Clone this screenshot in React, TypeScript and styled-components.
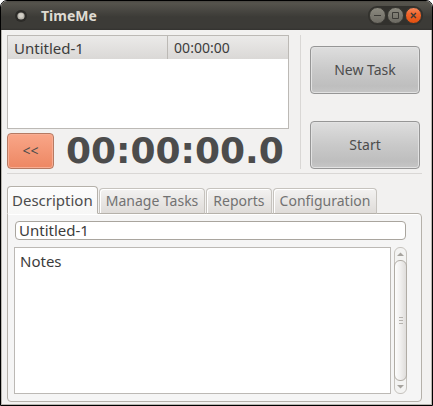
import React, { useState } from "react";
import styled, { createGlobalStyle, css } from "styled-components";

const Global = createGlobalStyle`
  *, *::before, *::after { box-sizing: border-box; }
  body { margin: 0; background: #fff; }
  button, input, textarea, table { font: inherit; color: inherit; }
  button { padding: 0; }
`;

const Window = styled.div`
  display: flex;
  flex-direction: column;
  min-height: 100vh;
  border: 1px solid #000;
  border-radius: 7px 7px 0 0;
  overflow: hidden;
  background: #f2f1f0;
  color: #4c4c4c;
  font: 15px/20px "Noto Sans", "Open Sans", sans-serif;
`;

const TitleBar = styled.header`
  display: flex;
  align-items: center;
  height: 29px;
  padding: 0 9px 0 12px;
  gap: 12px;
  background: linear-gradient(#4a4842, #56544d 2px, #3c3b37 16px, #3c3b37 27px, #33322f);
`;

const Title = styled.h1`
  flex: 1;
  margin: 0;
  font: bold 14px/20px "Noto Sans", sans-serif;
  color: #dfdbd2;
`;

const WindowButtons = styled.div`
  display: flex;
  gap: 1px;
  padding: 1px;
  border-radius: 9px;
  background: #32312d;
`;

const WindowButton = styled.button<{ $close?: boolean }>`
  display: flex;
  width: 17px;
  height: 17px;
  border: 1px solid #393833;
  border-radius: 50%;
  color: #3c3b37;
  background: ${(p) => (p.$close ? "linear-gradient(#f58a5f, #f2642a 40%, #e2500f)" : "linear-gradient(#8b897f, #6c6a62)")};
`;

const Body = styled.main`
  flex: 1;
  display: flex;
  flex-direction: column;
  padding: 5px 9px 2px 5px;
  border: 1px solid #b9b6b0;
  border-top: 0;
`;

const Top = styled.section`
  display: flex;
  padding-right: 2px;
  padding-bottom: 4px;
  border-bottom: 1px solid #d9d7d5;
`;

const Left = styled.div`
  flex: 1;
  display: flex;
  flex-direction: column;
  gap: 4px;
`;

const TaskList = styled.div`
  height: 94px;
  border: 1px solid #bcb9b5;
  background: #fff;
`;

const TaskTable = styled.table`
  width: 100%;
  border-collapse: collapse;
  color: #3c3c3c;
`;

const TaskRow = styled.tr`
  height: 23px;
  background: linear-gradient(#ebeae9, #dad8d6);
`;

const Cell = styled.td`
  padding: 0 6px;
`;

const TimeCell = styled(Cell)`
  width: 43%;
  border-left: 1px solid #bcb9b5;
  font-size: 14px;
`;

const TimerRow = styled.div`
  display: flex;
  align-items: center;
  gap: 12px;
  height: 36px;
`;

const PushButton = styled.button<{ $accent?: boolean }>`
  border-radius: 4px;
  font-size: 14px;
  ${(p) =>
    p.$accent
      ? css`
          width: 47px;
          height: 36px;
          border: 1px solid #b57a63;
          background: linear-gradient(#f9a688, #ed8763);
          box-shadow: inset 0 0 0 1px #f8ad93;
        `
      : css`
          width: 110px;
          height: 48px;
          border: 1px solid #969696;
          background: linear-gradient(#dedede, #c9c9c9 50%, #bebebe 85%, #c6c6c6);
          box-shadow: inset 0 0 0 1px #e2e2e2;
        `}
`;

const Timer = styled.output`
  font: bold 36px/36px "DejaVu Sans", sans-serif;
  white-space: nowrap;
`;

const Divider = styled.div`
  width: 1px;
  margin: 0 9px 0 11px;
  background: #d9d7d5;
`;

const Actions = styled.div`
  display: flex;
  flex-direction: column;
  justify-content: space-between;
  padding-top: 11px;
`;

const Tabs = styled.div`
  position: relative;
  display: flex;
  align-items: flex-end;
  gap: 1px;
  margin-top: 12px;
  height: 28px;
  margin-bottom: -1px;
`;

const Tab = styled.button<{ $active: boolean }>`
  height: ${(p) => (p.$active ? 28 : 26)}px;
  padding: 0 ${(p) => (p.$active ? 4 : 6)}px;
  border: 1px solid ${(p) => (p.$active ? "#b5b1aa" : "#c6c3be")};
  border-bottom-color: ${(p) => (p.$active ? "#f7f7f6" : "#b5b1aa")};
  border-radius: 4px 4px 0 0;
  font-size: ${(p) => (p.$active ? 15 : 14)}px;
  color: ${(p) => (p.$active ? "#4c4c4c" : "#727272")};
  background: ${(p) => (p.$active ? "linear-gradient(#fcfcfc, #f7f7f6)" : "linear-gradient(#f3f2f1, #dfdcd9)")};
  box-shadow: inset 1px 1px #fff;
`;

const Panel = styled.section`
  flex: 1;
  display: flex;
  flex-direction: column;
  gap: 7px;
  padding: 7px 14px 7px 6px;
  border: 1px solid #b5b1aa;
  border-radius: 0 4px 4px 4px;
  background: #f5f5f5;
  box-shadow: inset 0 1px #fff;
`;

const NameInput = styled.input`
  height: 19px;
  margin: 0 1px;
  padding: 0 3px 2px;
  border: 1px solid #a9a59e;
  border-radius: 4px;
  background: #fff;
  color: #3c3c3c;
`;

const NotesRow = styled.div`
  flex: 1;
  display: flex;
  gap: 3px;
`;

const Notes = styled.textarea`
  flex: 1;
  min-width: 0;
  min-height: 147px;
  margin: 0;
  padding: 3px 5px;
  border: 1px solid #bcb9b5;
  border-radius: 0;
  resize: none;
  overflow: hidden;
  background: #fff;
  color: #3c3c3c;
`;

const ScrollTrack = styled.div`
  display: flex;
  flex-direction: column;
  width: 13px;
  border: 1px solid #c6c3be;
  border-radius: 6px;
  background: #f3f3f2;
`;

const ScrollArrow = styled.button`
  display: flex;
  align-items: center;
  justify-content: center;
  height: 12px;
  border: 0;
  background: none;
`;

const ScrollThumb = styled.div`
  flex: 1;
  display: flex;
  align-items: center;
  justify-content: center;
  margin: 0 -1px;
  border: 1px solid #b0aca5;
  border-radius: 6px;
  background: linear-gradient(90deg, #fdfdfd, #f0efee 50%, #dfdddb);
`;

const tabNames = ["Description", "Manage Tasks", "Reports", "Configuration"];

export default function App() {
  const [active, setActive] = useState(tabNames[0]);
  return (
    <>
      <Global />
      <Window>
        <TitleBar>
          <svg width="16" height="16" viewBox="0 0 16 16" aria-hidden="true">
            <circle cx="8" cy="8" r="6" fill="#2c2b28" />
            <circle cx="8" cy="8" r="3.6" fill="#b9b6ae" />
            <circle cx="8" cy="7.5" r="2.2" fill="#d3d0c8" />
          </svg>
          <Title>TimeMe</Title>
          <WindowButtons>
            <WindowButton aria-label="Minimize">
              <svg width="15" height="15"><path d="M4 7.5h7" stroke="currentColor" /></svg>
            </WindowButton>
            <WindowButton aria-label="Maximize">
              <svg width="15" height="15"><path d="M4.5 4.5h6v6h-6z" fill="none" stroke="currentColor" /></svg>
            </WindowButton>
            <WindowButton aria-label="Close" $close>
              <svg width="15" height="15"><path d="M5 5l5 5M10 5l-5 5" fill="none" stroke="currentColor" strokeWidth="1.4" /></svg>
            </WindowButton>
          </WindowButtons>
        </TitleBar>
        <Body>
          <Top>
            <Left>
              <TaskList>
                <TaskTable aria-label="Tasks">
                  <tbody>
                    <TaskRow>
                      <Cell>Untitled-1</Cell>
                      <TimeCell>00:00:00</TimeCell>
                    </TaskRow>
                  </tbody>
                </TaskTable>
              </TaskList>
              <TimerRow>
                <PushButton $accent aria-label="Collapse">&lt;&lt;</PushButton>
                <Timer>00:00:00.0</Timer>
              </TimerRow>
            </Left>
            <Divider />
            <Actions>
              <PushButton>New Task</PushButton>
              <PushButton>Start</PushButton>
            </Actions>
          </Top>
          <Tabs role="tablist">
            {tabNames.map((name) => (
              <Tab key={name} role="tab" aria-selected={name === active} $active={name === active} onClick={() => setActive(name)}>
                {name}
              </Tab>
            ))}
          </Tabs>
          <Panel role="tabpanel" aria-label={active}>
            <NameInput aria-label="Task name" defaultValue="Untitled-1" />
            <NotesRow>
              <Notes aria-label="Notes" defaultValue="Notes" />
              <ScrollTrack>
                <ScrollArrow aria-label="Scroll up">
                  <svg width="7" height="4"><path d="M0 4l3.5-3.5L7 4z" fill="#a6a39e" /></svg>
                </ScrollArrow>
                <ScrollThumb>
                  <svg width="4" height="8"><path d="M0 .5h4M0 3.5h4M0 6.5h4" stroke="#b5b2ad" /></svg>
                </ScrollThumb>
                <ScrollArrow aria-label="Scroll down">
                  <svg width="7" height="4"><path d="M0 0l3.5 3.5L7 0z" fill="#a6a39e" /></svg>
                </ScrollArrow>
              </ScrollTrack>
            </NotesRow>
          </Panel>
        </Body>
      </Window>
    </>
  );
}
